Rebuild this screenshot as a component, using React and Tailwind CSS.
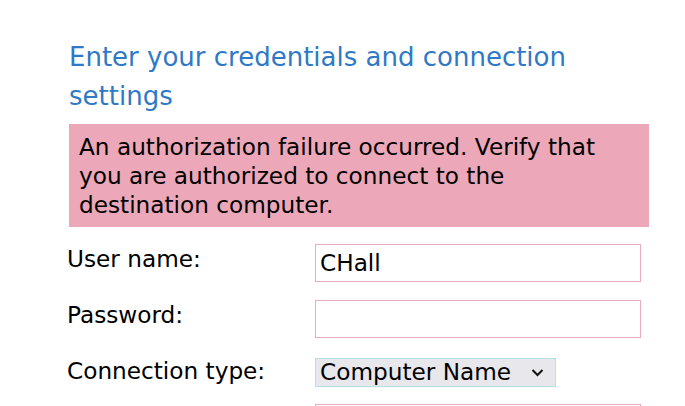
import React from 'react';

const font = { fontFamily: '"DejaVu Sans", "Noto Sans", sans-serif' };

export default function App() {
  return (
    <div className="w-[685px] h-[406px] overflow-hidden bg-white" style={font}>
      <div className="pl-[69px] pt-[38px]">
        <h1 className="text-[26px] leading-[39px] text-[#2f79c7] font-normal w-[560px]">
          Enter your credentials and connection settings
        </h1>
        <div className="mt-[8px] w-[580px] h-[103px] bg-[#eca8b9] pl-[10px] pr-[20px] pt-[8px] text-[23.2px] leading-[29px] text-black">
          An authorization failure occurred. Verify that you are authorized to connect to the destination computer.
        </div>
      </div>
      <div className="pl-[67px] mt-[17px] grid grid-cols-[248px_326px] gap-y-[18px]">
        <label className="text-[23.2px] leading-[30px] text-black">User name:</label>
        <div className="h-[38px] border border-[#eda9c2] px-[4px] flex items-center text-[23.2px] text-black">CHall</div>
        <label className="text-[23.2px] leading-[30px] text-black">Password:</label>
        <div className="h-[38px] border border-[#eda9c2]"></div>
        <label className="text-[23.2px] leading-[30px] text-black">Connection type:</label>
        <div className="mt-[2px]">
          <div className="w-[241px] h-[29px] border border-[#b4e0e8] bg-[#e8e7ec] flex items-center justify-between pl-[4px] pr-[10px] text-[23.2px] text-black">
            <span>Computer Name</span>
            <svg width="15" height="9" viewBox="0 0 15 9">
              <path d="M2.5 2 L7.5 7 L12.5 2" fill="none" stroke="#111" strokeWidth="2" />
            </svg>
          </div>
        </div>
        <div></div>
        <div className="h-[38px] border border-[#eda9c2] -mt-[1px]"></div>
      </div>
    </div>
  );
}
